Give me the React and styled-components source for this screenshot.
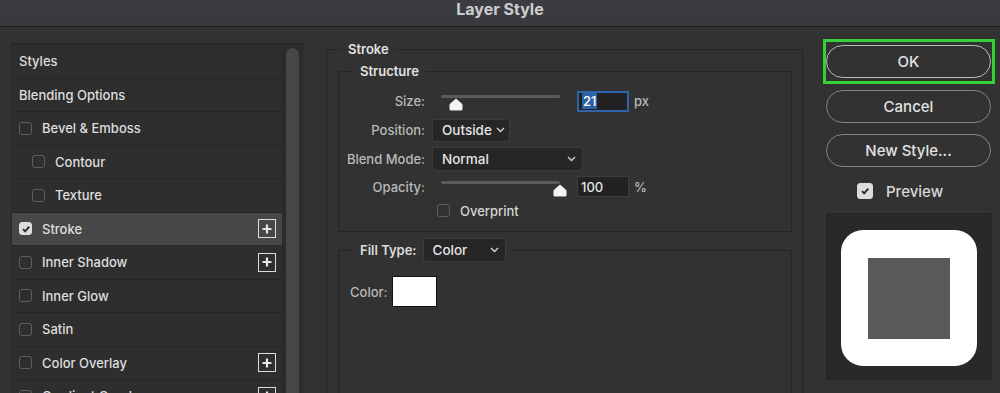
import React from "react";
import styled, { createGlobalStyle } from "styled-components";

const GlobalStyle = createGlobalStyle`
  html, body { margin: 0; padding: 0; background: #323232; }
  body { font-family: Inter, "Noto Sans", "Liberation Sans", sans-serif; }
`;

const styleItems = [
    { label: "Styles", header: true },
    { label: "Blending Options", header: true },
    { label: "Bevel & Emboss" },
    { label: "Contour", indent: true },
    { label: "Texture", indent: true },
    { label: "Stroke", checked: true, plus: true, active: true },
    { label: "Inner Shadow", plus: true },
    { label: "Inner Glow" },
    { label: "Satin" },
    { label: "Color Overlay", plus: true },
    { label: "Gradient Overlay", plus: true },
];

function Chevron () {
    return (
        <ChevronIcon width="9" height="6" viewBox="0 0 9 6">
            <polyline points="1,1 4.5,4.5 8,1" fill="none" stroke="#d0d0d0" strokeWidth="1.4" />
        </ChevronIcon>
    );
}

function Check ({ checked, light }) {
    return (
        <CheckBox $checked={checked} $light={light}>
            {checked && (
                <svg width="10" height="10" viewBox="0 0 10 10">
                    <polyline points="2,5.2 4.2,7.4 8.2,2.6" fill="none" stroke="#2a2a2a" strokeWidth="1.9" />
                </svg>
            )}
        </CheckBox>
    );
}

function PlusBox () {
    return (
        <PlusFrame>
            <svg width="12" height="12" viewBox="0 0 12 12">
                <path d="M6 1.5v9M1.5 6h9" stroke="#e6e6e6" strokeWidth="2.2" />
            </svg>
        </PlusFrame>
    );
}

function Slider ({ value }) {
    return (
        <SliderWrap>
            <Track />
            <Thumb style={{ left: `${value}%` }}>
                <svg width="14" height="13" viewBox="0 0 14 13">
                    <path d="M7 0.5 L13.2 6 Q13.5 6.3 13.5 7 L13.5 11 Q13.5 12.5 12 12.5 L2 12.5 Q0.5 12.5 0.5 11 L0.5 7 Q0.5 6.3 0.8 6 Z" fill="#f2f2f2" />
                </svg>
            </Thumb>
        </SliderWrap>
    );
}

export default function App () {
    return (
        <>
        <GlobalStyle />
        <Window>
            <TitleBar>Layer Style</TitleBar>
            <Body>
                <StylesPanel>
                    <StyleList>
                        {styleItems.map((item) => (
                            <StyleRow key={item.label} $active={item.active} $indent={item.indent}>
                                {!item.header && <Check checked={item.checked} light={item.checked} />}
                                <RowLabel>{item.label}</RowLabel>
                                {item.plus && <PlusBox />}
                            </StyleRow>
                        ))}
                    </StyleList>
                    <ScrollTrack>
                        <ScrollThumb />
                    </ScrollTrack>
                </StylesPanel>

                <Settings>
                    <Group $outer>
                        <GroupTitle $outer>Stroke</GroupTitle>
                        <Group>
                            <GroupTitle>Structure</GroupTitle>
                            <FormGrid>
                                <FieldLabel>Size:</FieldLabel>
                                <FieldRow>
                                    <Slider value={13} />
                                    <NumberBox $focused><Selected>21</Selected></NumberBox>
                                    <Unit>px</Unit>
                                </FieldRow>

                                <FieldLabel>Position:</FieldLabel>
                                <FieldRow>
                                    <Dropdown $width={78} $height={23}>Outside<Chevron /></Dropdown>
                                </FieldRow>

                                <FieldLabel>Blend Mode:</FieldLabel>
                                <FieldRow>
                                    <Dropdown $width={151} $height={24}>Normal<Chevron /></Dropdown>
                                </FieldRow>

                                <FieldLabel>Opacity:</FieldLabel>
                                <FieldRow>
                                    <Slider value={100} />
                                    <NumberBox>100</NumberBox>
                                    <Unit>%</Unit>
                                </FieldRow>

                                <span />
                                <OverprintRow>
                                    <Check />
                                    <OptionText>Overprint</OptionText>
                                </OverprintRow>
                            </FormGrid>
                        </Group>

                        <Group $fill>
                            <GroupTitle $row>
                                <LegendLabel>Fill Type:</LegendLabel>
                                <Dropdown $width={83} $height={24}>Color<Chevron /></Dropdown>
                            </GroupTitle>
                            <ColorRow>
                                <FieldLabel as="span">Color:</FieldLabel>
                                <Swatch />
                            </ColorRow>
                        </Group>
                    </Group>
                </Settings>

                <Actions>
                    <FocusRing>
                        <PillButton $primary>OK</PillButton>
                    </FocusRing>
                    <PillButton>Cancel</PillButton>
                    <PillButton $gap={11}>New Style...</PillButton>
                    <PreviewToggle>
                        <Check checked light />
                        <PreviewText>Preview</PreviewText>
                    </PreviewToggle>
                    <PreviewBox>
                        <StrokeShape>
                            <FillShape />
                        </StrokeShape>
                    </PreviewBox>
                </Actions>
            </Body>
        </Window>
        </>
    );
}

const Window = styled.div`
    width: 1000px;
    height: 393px;
    overflow: hidden;
    background: #323232;
`;

const TitleBar = styled.div`
    height: 26px;
    line-height: 18px;
    text-align: center;
    font-size: 16px;
    font-weight: 700;
    color: #cdcdcf;
    background: linear-gradient(#3c3d41, #38393d);
    border-bottom: 1px solid #1b1b1b;
`;

const Body = styled.div`
    display: flex;
    align-items: flex-start;
    padding-left: 11px;
`;

const StylesPanel = styled.div`
    margin-top: 16px;
    width: 292px;
    height: 360px;
    display: flex;
    background: #2a2a2a;
    border-top: 1px solid #262626;
`;

const StyleList = styled.div`
    width: 270px;
    margin-left: 1px;
    padding-top: 1px;
    display: flex;
    flex-direction: column;
`;

const StyleRow = styled.div`
    box-sizing: border-box;
    height: 33.5px;
    flex: 0 0 33.5px;
    display: flex;
    align-items: center;
    gap: 10px;
    padding-left: ${(p) => (p.$indent ? "20px" : "7px")};
    padding-right: 6px;
    background: ${(p) => (p.$active ? "#474747" : "#2e2e2e")};
    border-bottom: 1px solid #262626;
    color: #dedede;
    font-size: 13px;
    font-weight: 500;
`;

const RowLabel = styled.span`
    flex: 1;
`;

const CheckBox = styled.span`
    box-sizing: border-box;
    width: 13px;
    height: 13px;
    flex: 0 0 13px;
    border-radius: 3px;
    border: 1.5px solid ${(p) => (p.$light ? "#dcdcdc" : "#5e5e5e")};
    background: ${(p) => (p.$light ? "#dcdcdc" : "transparent")};
    display: flex;
    align-items: center;
    justify-content: center;
`;

const PlusFrame = styled.span`
    box-sizing: border-box;
    width: 18px;
    height: 19px;
    border: 1.5px solid #dcdcdc;
    display: flex;
    align-items: center;
    justify-content: center;
`;

const ScrollTrack = styled.div`
    margin-left: 2px;
    width: 17px;
    padding-top: 4px;
    display: flex;
    justify-content: center;
    background: #2c2c2c;
`;

const ScrollThumb = styled.div`
    width: 13px;
    height: 400px;
    border-radius: 7px;
    background: #464646;
`;

const Settings = styled.div`
    margin-left: 23px;
    margin-top: 14px;
    width: 477px;
`;

const Group = styled.fieldset`
    margin: ${(p) => (p.$outer ? "0" : "6px 0 0 0")};
    padding: ${(p) => (p.$outer ? "0 10px 0 11px" : "0")};
    border: 1px solid #262626;
    min-width: 0;
    height: ${(p) => (p.$fill ? "200px" : "auto")};
    ${(p) => p.$outer && "height: 420px;"}
`;

const GroupTitle = styled.legend`
    margin-left: ${(p) => (p.$outer ? "4px" : "15px")};
    padding: 0 6px;
    font-size: 13px;
    font-weight: 600;
    color: #e2e2e2;
    line-height: 16px;
    display: ${(p) => (p.$row ? "flex" : "block")};
    align-items: center;
    gap: 6px;
`;

const LegendLabel = styled.span`
    font-weight: 600;
    color: #dcdcdc;
`;

const FormGrid = styled.div`
    display: grid;
    grid-template-columns: 86px 1fr;
    column-gap: 7px;
    grid-template-rows: 29px 29px 29px 26px 22px;
    align-items: center;
    padding: 7.5px 0 9.5px 0;
`;

const FieldLabel = styled.label`
    text-align: right;
    font-size: 13px;
    color: #b9b9b9;
    font-weight: 500;
`;

const FieldRow = styled.div`
    display: flex;
    align-items: center;
    height: 100%;
`;

const SliderWrap = styled.div`
    position: relative;
    margin-left: 9px;
    width: 119px;
    height: 20px;
`;

const Track = styled.div`
    margin-top: 4px;
    height: 3px;
    border-radius: 2px;
    background: #5b5b5b;
`;

const Thumb = styled.div`
    position: absolute;
    top: 7px;
    margin-left: -7px;
    display: flex;
`;

const NumberBox = styled.div`
    box-sizing: border-box;
    margin-left: 17px;
    width: 52px;
    height: 21px;
    padding: 0 3px;
    display: flex;
    align-items: center;
    background: #222222;
    border: ${(p) => (p.$focused ? "2px solid #2f64ad" : "1px solid #3e3e3e")};
    color: #e4e4e4;
    font-size: 13px;
    font-weight: 500;
`;

const Selected = styled.span`
    background: #2d62a8;
    color: #ffffff;
    padding: 0 1px;
`;

const Unit = styled.span`
    margin-left: 5px;
    font-size: 13px;
    color: #b9b9b9;
    font-weight: 500;
`;

const Dropdown = styled.div`
    box-sizing: border-box;
    width: ${(p) => p.$width}px;
    height: ${(p) => p.$height}px;
    padding: 0 6px 0 9px;
    display: flex;
    align-items: center;
    justify-content: space-between;
    gap: 4px;
    background: #262626;
    border: 1px solid #3c3c3c;
    border-radius: 3px;
    color: #e4e4e4;
    font-size: 13.5px;
    font-weight: 500;
    white-space: nowrap;
`;

const ChevronIcon = styled.svg`
    flex: none;
`;

const OverprintRow = styled.div`
    display: flex;
    align-items: center;
    gap: 10px;
    padding-left: 5px;
`;

const OptionText = styled.span`
    font-size: 13px;
    color: #d6d6d6;
    font-weight: 500;
`;

const ColorRow = styled.div`
    display: flex;
    align-items: center;
    gap: 5px;
    padding: 14px 0 0 11px;
`;

const Swatch = styled.div`
    box-sizing: border-box;
    width: 45px;
    height: 31px;
    background: #ffffff;
    border: 1px solid #111;
`;

const Actions = styled.div`
    margin-left: 23px;
    margin-top: 12px;
    width: 166px;
    display: flex;
    flex-direction: column;
`;

const FocusRing = styled.div`
    margin: 0 -3px 0 -3px;
    padding: 3px 1px 3px 0;
    border: 3px solid #35d135;
    display: flex;
`;

const PillButton = styled.div`
    box-sizing: border-box;
    width: 165px;
    height: 33px;
    margin-top: ${(p) => (p.$primary ? 0 : p.$gap || 6)}px;
    border-radius: 17px;
    border: 1px solid ${(p) => (p.$primary ? "#bdbdbd" : "#858585")};
    display: flex;
    align-items: center;
    justify-content: center;
    color: #e2e2e2;
    font-size: 15px;
    font-weight: 500;
`;

const PreviewToggle = styled.div`
    margin-top: 16px;
    display: flex;
    align-items: center;
    gap: 13px;
    padding-left: 31px;
    height: 16px;

    & > span:first-child {
        width: 16px;
        height: 16px;
        flex-basis: 16px;
    }
`;

const PreviewText = styled.span`
    font-size: 15px;
    color: #d8d8d8;
    font-weight: 500;
`;

const PreviewBox = styled.div`
    margin-top: 14px;
    width: 166px;
    height: 167px;
    box-sizing: border-box;
    padding: 16px 16px 0 14px;
    background: #292929;
    border: 1px solid #262626;
`;

const StrokeShape = styled.div`
    width: 136px;
    height: 136px;
    border-radius: 22px;
    background: #ffffff;
    display: flex;
    align-items: center;
    justify-content: center;
`;

const FillShape = styled.div`
    width: 82px;
    height: 81px;
    background: #5a5a5a;
`;
